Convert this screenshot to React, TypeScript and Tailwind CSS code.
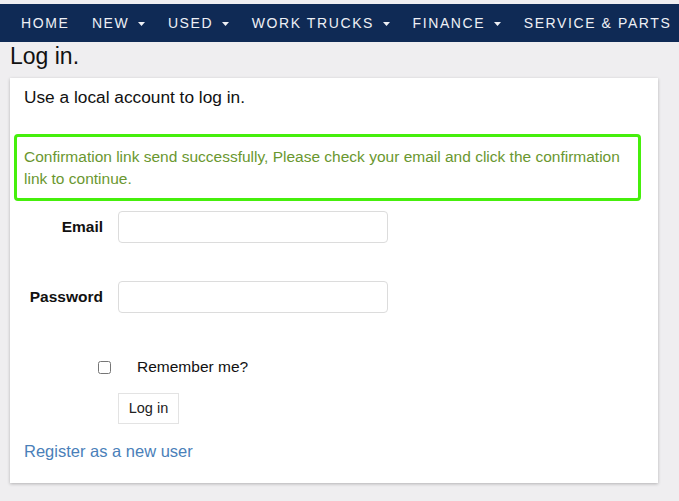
import React from 'react';

const navItems = [
  { label: 'Home', caret: false },
  { label: 'New', caret: true },
  { label: 'Used', caret: true },
  { label: 'Work Trucks', caret: true },
  { label: 'Finance', caret: true },
  { label: 'Service & Parts', caret: false },
];

function Caret() {
  return (
    <svg width="7" height="4" viewBox="0 0 7 4" className="ml-[9px] mt-[1px]" aria-hidden="true">
      <path d="M0 0h7L3.5 4z" fill="currentColor" />
    </svg>
  );
}

function Field({ label, type }: { label: string; type: string }) {
  return (
    <div className="flex items-center">
      <label className="w-[79px] text-right text-[15.5px] font-bold text-[#111]">{label}</label>
      <input
        type={type}
        className="ml-[15px] h-[32px] w-[270px] rounded-[4px] border border-[#dcdcdc] bg-white px-2 text-[15px] outline-none"
      />
    </div>
  );
}

export default function App() {
  return (
    <div className="min-h-[501px] bg-[#efeef0] pt-[4px] font-['Liberation_Sans',Arial,sans-serif]">
      <nav className="flex h-[38px] items-center gap-[22.5px] bg-[#0f2a55] pl-[21px] text-[14px] uppercase tracking-[1.6px] text-[#eef0f5] whitespace-nowrap overflow-hidden">
        {navItems.map((item) => (
          <a key={item.label} href="#" className="flex items-center">
            {item.label}
            {item.caret && <Caret />}
          </a>
        ))}
      </nav>

      <h1 className="pl-[10px] text-[23px] leading-[29px] text-[#111]">Log in.</h1>

      <div className="ml-[10px] mt-[7px] w-[648px] bg-white pl-[14px] pb-[19px] pt-[7px] shadow-[0_1px_3px_rgba(0,0,0,0.25)]">
        <p className="text-[17.3px] leading-[24px] text-[#111]">Use a local account to log in.</p>

        <div className="-ml-[10px] mt-[25px] w-[627px] rounded-[4px] border-[3px] border-[#46ef0c] pb-[8px] pl-[7px] pr-[10px] pt-[9px] text-[15.5px] leading-[22px] text-[#6a972f]">
          Confirmation link send successfully, Please check your email and click the confirmation link to continue.
        </div>

        <div className="mt-[10px]">
          <Field label="Email" type="email" />
        </div>
        <div className="mt-[38px]">
          <Field label="Password" type="password" />
        </div>

        <div className="mt-[42px] flex h-[24px] items-center">
          <input type="checkbox" className="ml-[74px] h-[13px] w-[13px]" />
          <span className="ml-[26px] text-[15.5px] text-[#111]">Remember me?</span>
        </div>

        <button
          type="button"
          className="ml-[94px] mt-[14px] h-[31px] w-[61px] border border-[#e3e3e3] bg-white text-[14.5px] text-[#222]"
        >
          Log in
        </button>

        <div className="mt-[15px]">
          <a href="#" className="text-[16.5px] leading-[24px] text-[#4a80b9]">
            Register as a new user
          </a>
        </div>
      </div>
    </div>
  );
}
